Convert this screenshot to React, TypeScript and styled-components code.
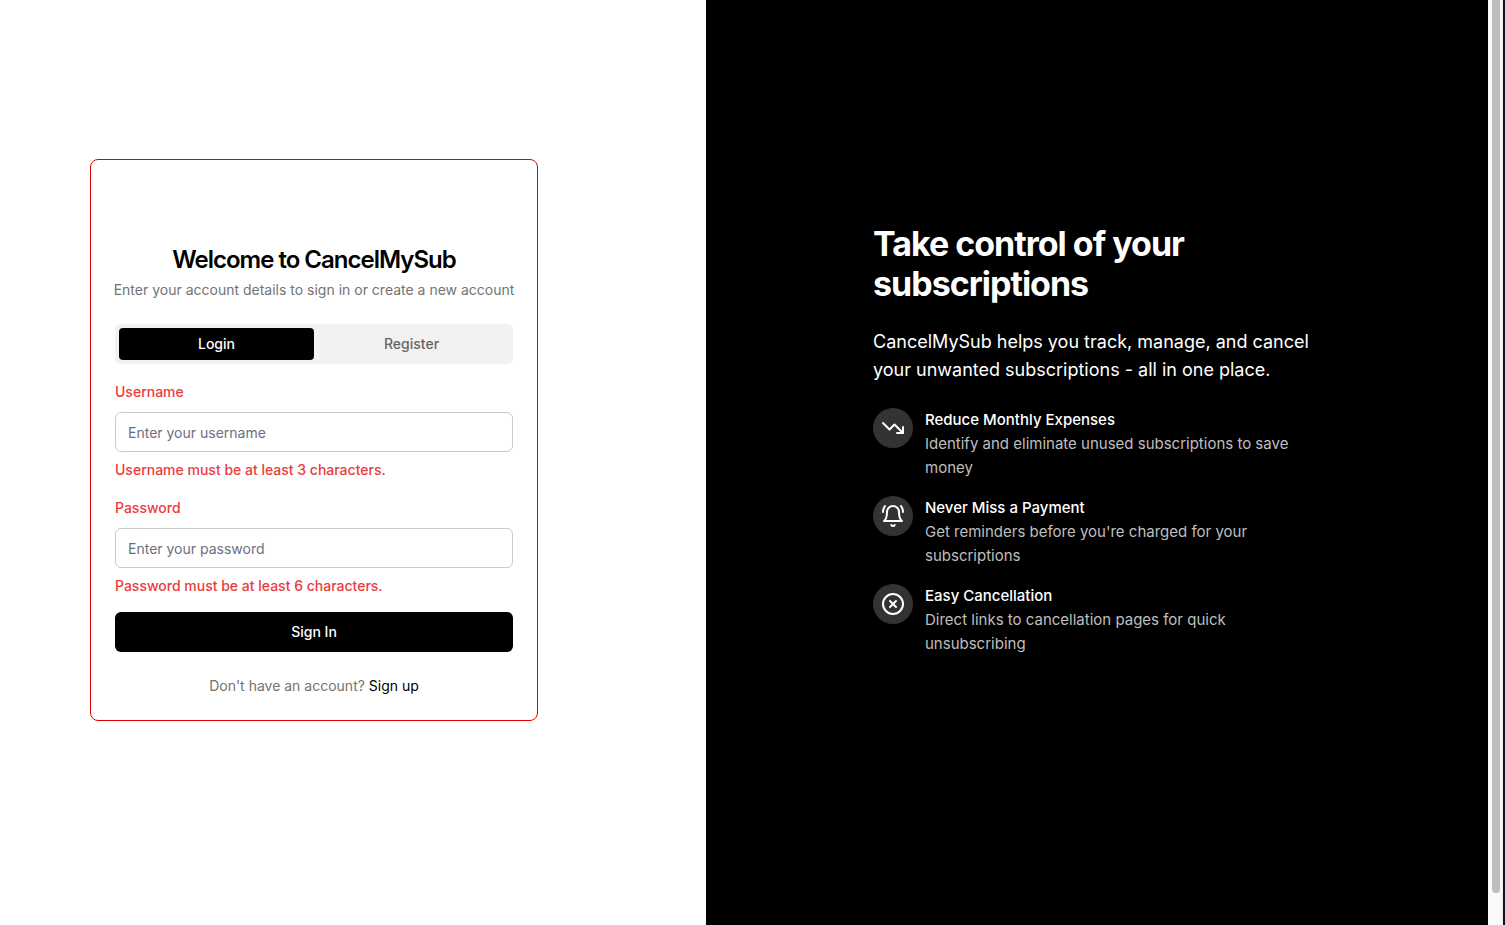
import React from "react";
import styled, { createGlobalStyle } from "styled-components";
import { CircleX, TrendingDown } from "lucide-react";

const GlobalStyle = createGlobalStyle`
  *, *::before, *::after { box-sizing: border-box; }
  body { margin: 0; background: #fff; }
  body, button, input {
    font-family: Inter, "Liberation Sans", sans-serif;
  }
  h1, h2, h3, p, ul { margin: 0; padding: 0; }
`;

const Page = styled.div`
  display: grid;
  grid-template-columns: minmax(0, 706fr) minmax(0, 782fr) 17px;
  min-height: 100vh;
  color: #000;
  font-size: 14px;
  line-height: 20px;
`;

const Panel = styled.section`
  display: flex;
  align-items: center;
  justify-content: center;
  padding-bottom: 45px;
`;

const FormPanel = styled(Panel)`
  padding-right: 78px;
`;

const HeroPanel = styled(Panel)`
  background: #000;
  color: #fff;
`;

const Card = styled.div`
  width: 100%;
  max-width: 448px;
  padding: 24px;
  border: 1px solid #e00000;
  border-radius: 8px;
  background: #fff;
`;

const CardHeader = styled.header`
  display: flex;
  flex-direction: column;
  align-items: center;
  gap: 4px;
  padding: 60px 0 24px;
  white-space: nowrap;
`;

const CardTitle = styled.h1`
  font-size: 24px;
  line-height: 32px;
  font-weight: 600;
  letter-spacing: -1px;
`;

const Muted = styled.p`
  color: #737373;
`;

const Tabs = styled.div`
  display: grid;
  grid-template-columns: 1fr 1fr;
  padding: 4px;
  border-radius: 6px;
  background: #f2f2f2;
`;

const Tab = styled.button<{ $active?: boolean }>`
  height: 32px;
  padding: 0 12px;
  border: 0;
  border-radius: 4px;
  background: ${({ $active }) => ($active ? "#000" : "transparent")};
  color: ${({ $active }) => ($active ? "#fff" : "#666")};
  font-size: 14px;
  font-weight: 500;
  line-height: 20px;
`;

const Form = styled.form`
  display: flex;
  flex-direction: column;
  gap: 16px;
  padding: 16px 0 24px;
`;

const Field = styled.div`
  display: flex;
  flex-direction: column;
  gap: 8px;
`;

const Label = styled.label`
  color: #e93c3c;
  font-weight: 500;
  line-height: 24px;
`;

const Input = styled.input`
  width: 100%;
  height: 40px;
  padding: 0 12px;
  border: 1px solid #c9ccd6;
  border-radius: 6px;
  background: #fff;
  font-size: 14px;
  line-height: 20px;
  &::placeholder { color: #6b7080; opacity: 1; }
`;

const FieldError = styled.p`
  color: #e93c3c;
  font-weight: 500;
`;

const SubmitButton = styled.button`
  height: 40px;
  border: 0;
  border-radius: 6px;
  background: #000;
  color: #fff;
  font-size: 14px;
  font-weight: 500;
  line-height: 20px;
`;

const Footer = styled(Muted)`
  text-align: center;
`;

const TextLink = styled.a`
  color: #000;
  text-decoration: none;
`;

const Hero = styled.div`
  display: flex;
  flex-direction: column;
  gap: 24px;
  width: 100%;
  max-width: 448px;
`;

const HeroTitle = styled.h2`
  font-size: 34px;
  line-height: 40px;
  font-weight: 700;
  letter-spacing: -1px;
`;

const Lead = styled.p`
  font-size: 18px;
  line-height: 28px;
`;

const FeatureList = styled.ul`
  display: flex;
  flex-direction: column;
  gap: 16px;
  list-style: none;
`;

const FeatureItem = styled.li`
  display: flex;
  align-items: flex-start;
  gap: 12px;
  font-size: 15px;
  line-height: 24px;
`;

const IconDisc = styled.span`
  display: flex;
  flex: none;
  align-items: center;
  justify-content: center;
  width: 40px;
  height: 40px;
  border-radius: 50%;
  background: #333;
`;

const FeatureTitle = styled.h3`
  font-size: 15px;
  font-weight: 500;
`;

const FeatureText = styled.p`
  color: #bfbfbf;
`;

const ScrollTrack = styled.div`
  padding: 0 3px 32px 4px;
  border-right: 2px solid #0b1224;
  background: linear-gradient(to right, #fafafa 70%, #f0f0f0);
`;

const ScrollThumb = styled.div`
  height: 100%;
  border-radius: 0 0 4px 4px;
  background: #bebebe;
`;

function RingingBell() {
  return (
    <svg
      width="24"
      height="24"
      viewBox="0 0 24 24"
      fill="none"
      stroke="currentColor"
      strokeWidth="2"
      strokeLinecap="round"
      strokeLinejoin="round"
      aria-hidden="true"
    >
      <path d="M6 8a6 6 0 0 1 12 0c0 7 3 9 3 9H3s3-2 3-9" />
      <path d="M10.3 21a1.94 1.94 0 0 0 3.4 0" />
      <path d="M4 2C2.8 3.7 2 5.7 2 8" />
      <path d="M22 8c0-2.3-.8-4.3-2-6" />
    </svg>
  );
}

const fields = [
  { id: "username", type: "text", label: "Username", hint: "Enter your username", error: "Username must be at least 3 characters." },
  { id: "password", type: "password", label: "Password", hint: "Enter your password", error: "Password must be at least 6 characters." },
];

const features = [
  { icon: <TrendingDown size={24} aria-hidden="true" />, title: "Reduce Monthly Expenses", text: "Identify and eliminate unused subscriptions to save money" },
  { icon: <RingingBell />, title: "Never Miss a Payment", text: "Get reminders before you're charged for your subscriptions" },
  { icon: <CircleX size={24} aria-hidden="true" />, title: "Easy Cancellation", text: "Direct links to cancellation pages for quick unsubscribing" },
];

export default function App() {
  return (
    <>
      <GlobalStyle />
      <Page>
        <FormPanel>
          <Card>
            <CardHeader>
              <CardTitle>Welcome to CancelMySub</CardTitle>
              <Muted>Enter your account details to sign in or create a new account</Muted>
            </CardHeader>
            <Tabs role="tablist">
              <Tab type="button" role="tab" aria-selected="true" $active>Login</Tab>
              <Tab type="button" role="tab" aria-selected="false">Register</Tab>
            </Tabs>
            <Form noValidate onSubmit={(e) => e.preventDefault()}>
              {fields.map((f) => (
                <Field key={f.id}>
                  <Label htmlFor={f.id}>{f.label}</Label>
                  <Input id={f.id} type={f.type} placeholder={f.hint} aria-invalid="true" aria-describedby={`${f.id}-error`} />
                  <FieldError id={`${f.id}-error`}>{f.error}</FieldError>
                </Field>
              ))}
              <SubmitButton type="submit">Sign In</SubmitButton>
            </Form>
            <Footer>
              Don't have an account? <TextLink href="#register">Sign up</TextLink>
            </Footer>
          </Card>
        </FormPanel>
        <HeroPanel>
          <Hero>
            <HeroTitle>Take control of your subscriptions</HeroTitle>
            <Lead>CancelMySub helps you track, manage, and cancel your unwanted subscriptions - all in one place.</Lead>
            <FeatureList>
              {features.map(({ icon, title, text }) => (
                <FeatureItem key={title}>
                  <IconDisc>{icon}</IconDisc>
                  <div>
                    <FeatureTitle>{title}</FeatureTitle>
                    <FeatureText>{text}</FeatureText>
                  </div>
                </FeatureItem>
              ))}
            </FeatureList>
          </Hero>
        </HeroPanel>
        <ScrollTrack aria-hidden="true"><ScrollThumb /></ScrollTrack>
      </Page>
    </>
  );
}
